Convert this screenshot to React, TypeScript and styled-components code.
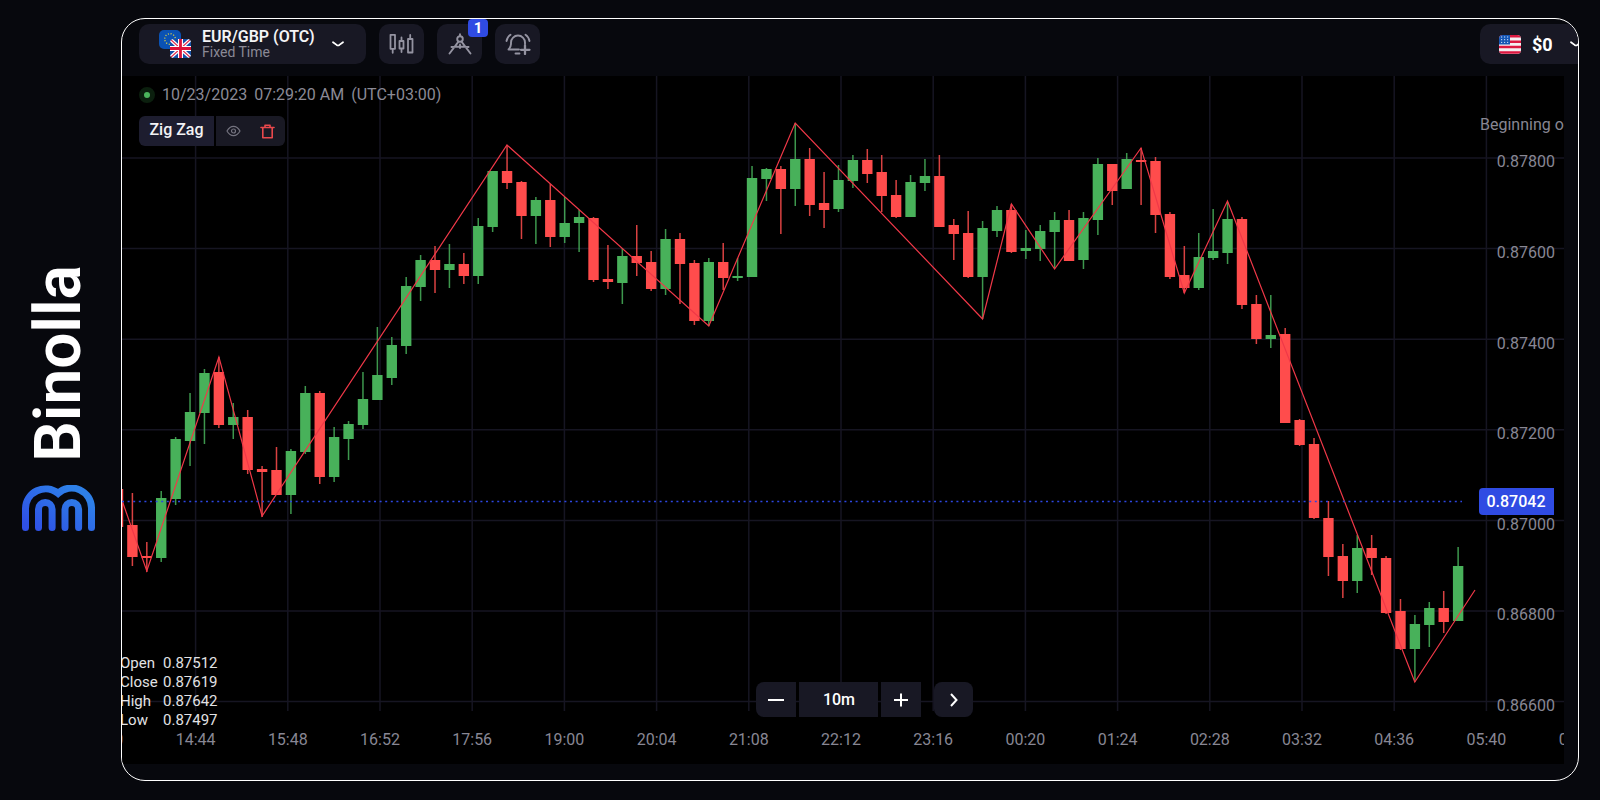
import React from 'react';
import styled, { createGlobalStyle } from 'styled-components';

const Global = createGlobalStyle`
  * { box-sizing: border-box; }
  body { margin: 0; background: #07080d; font-family: Roboto, "Liberation Sans", sans-serif; color: #fff; }
  button { font: inherit; color: inherit; border: 0; padding: 0; cursor: pointer; }
`;

const Page = styled.div`
  display: flex;
  min-height: 100vh;
  padding: 18px 21px 18px 0;
`;

const Side = styled.aside`
  flex: none;
  width: 121px;
  padding: 0 0 4px 22px;
  display: flex;
  flex-direction: column;
  justify-content: center;
  gap: 24px;
`;

const BrandName = styled.div`
  writing-mode: vertical-rl;
  transform: rotate(180deg);
  width: 74px;
  font-size: 64px;
  line-height: 74px;
  font-weight: 600;
`;

const Frame = styled.main`
  flex: 1;
  min-width: 0;
  align-self: flex-start;
  padding-bottom: 16px;
  border: 1px solid #fff;
  border-radius: 24px;
  overflow: hidden;
`;

const Header = styled.header`
  display: flex;
  gap: 13px;
  height: 57px;
  padding: 5px 0 12px 17px;
`;

const Control = styled.button<{ $w: number }>`
  position: relative;
  flex: none;
  width: ${(p) => p.$w}px;
  height: 40px;
  display: flex;
  align-items: center;
  justify-content: center;
  background: #181824;
  border-radius: 10px;

  svg { flex: none; }
`;

const Asset = styled(Control)`
  justify-content: flex-start;
  padding-left: 20px;
  text-align: left;
`;

const AssetText = styled.span`
  display: flex;
  flex-direction: column;
  margin: 0 17px 0 10px;
`;

const AssetName = styled.span`
  font-size: 16px;
  line-height: 16px;
  font-weight: 600;
  color: #f4f4f6;
`;

const AssetKind = styled.span`
  font-size: 14px;
  line-height: 14px;
  color: #8b8a96;
`;

const Account = styled(Control)`
  margin-left: auto;
  justify-content: flex-start;
  gap: 11px;
  padding-left: 19px;
  border-radius: 10px 0 0 10px;
  font-size: 18px;
  font-weight: 700;
`;

const AccountArrow = styled.span`
  display: flex;
  padding-left: 6px;
`;

const Badge = styled.span`
  position: absolute;
  top: -5px;
  right: -6px;
  width: 20px;
  height: 18px;
  border-radius: 4px;
  background: #2f4be3;
  font-size: 15px;
  line-height: 18px;
  font-weight: 700;
  text-align: center;
`;

const Chart = styled.section`
  position: relative;
  margin-right: 14px;
  background: #000;
`;

const Plot = styled.svg`
  display: block;
  width: 100%;
  height: auto;
`;

const Tick = styled.text<{ $strong?: boolean }>`
  font-size: 16px;
  font-weight: ${(p) => (p.$strong ? 500 : 400)};
  fill: ${(p) => (p.$strong ? '#fff' : '#888794')};
`;

const TopOverlay = styled.div`
  position: absolute;
  top: 10px;
  left: 17px;
  display: flex;
  flex-direction: column;
  gap: 12px;
`;

const Clock = styled.div`
  display: flex;
  align-items: center;
  gap: 7px;
  font-size: 16px;
  line-height: 18px;
  color: #8b8a96;
`;

const Dot = styled.span`
  width: 16px;
  height: 16px;
  border-radius: 50%;
  border: 5px solid #0b1f0e;
  background: #4bb55c;
`;

const Indicator = styled.div`
  display: flex;
  gap: 2px;
  height: 30px;
`;

const IndicatorName = styled.button`
  width: 75px;
  background: #1d1d2f;
  border-radius: 6px 0 0 6px;
  font-size: 16px;
  font-weight: 500;
  line-height: 28px;
  padding-bottom: 2px;
  color: #f2f2f4;
`;

const IndicatorTools = styled.div`
  display: flex;
  align-items: center;
  width: 69px;
  background: #191924;
  border-radius: 0 6px 6px 0;
`;

const ToolButton = styled.button`
  flex: 1;
  display: flex;
  justify-content: center;
  background: none;
`;

const Ohlc = styled.table`
  position: absolute;
  left: -2px;
  bottom: 34px;
  border-collapse: collapse;
  font-size: 15px;
  line-height: 19px;
  color: #e2e2e4;

  th, td { padding: 0; font-weight: 400; text-align: left; }
  th { width: 43px; }
`;

const IntervalBar = styled.div`
  position: absolute;
  left: 44%;
  bottom: 47px;
  display: flex;
  gap: 3px;
`;

const IntervalButton = styled.button<{ $w: number; $radius?: string }>`
  width: ${(p) => p.$w}px;
  height: 35px;
  display: flex;
  align-items: center;
  justify-content: center;
  background: #181824;
  border-radius: ${(p) => p.$radius ?? '0'};
  font-size: 16px;
  font-weight: 500;
`;

const NextWrap = styled.div`
  padding-left: 10px;
`;

const WIDTH = 1442;
const HEIGHT = 688;
const STEP = 14.41;
const FIRST_X = 10.4;

type Candle = [dir: 'u' | 'd', high: number, top: number, bottom: number, low: number];

const candles: Candle[] = [
  ['d', 413, 413, 451, 451], ['d', 417, 449, 481, 490], ['d', 466, 480, 482, 496], ['u', 415, 422, 482, 486],
  ['u', 361, 363, 423, 429], ['u', 317, 336, 365, 390], ['u', 293, 297, 337, 368], ['d', 281, 296, 349, 352],
  ['u', 327, 341, 349, 363], ['d', 334, 341, 394, 398], ['d', 390, 393, 396, 441], ['d', 371, 394, 419, 419],
  ['u', 373, 375, 419, 438], ['u', 310, 317, 376, 378], ['d', 315, 317, 401, 408], ['u', 351, 361, 401, 406],
  ['u', 345, 348, 363, 384], ['u', 296, 323, 349, 353], ['u', 251, 299, 324, 324], ['u', 261, 269, 302, 309],
  ['u', 201, 210, 270, 278], ['u', 179, 184, 211, 225], ['d', 170, 184, 194, 217], ['u', 168, 188, 194, 212],
  ['d', 177, 188, 200, 208], ['u', 142, 150, 200, 208], ['u', 95, 95, 151, 156], ['d', 69, 95, 107, 113],
  ['d', 105, 106, 140, 163], ['u', 121, 124, 140, 168], ['d', 108, 124, 161, 171], ['u', 121, 147, 161, 167],
  ['u', 134, 141, 147, 176], ['d', 141, 142, 204, 206], ['d', 169, 203, 206, 213], ['u', 172, 180, 207, 228],
  ['d', 149, 180, 187, 200], ['d', 175, 186, 213, 215], ['u', 153, 163, 213, 219], ['d', 157, 163, 188, 228],
  ['d', 184, 187, 245, 249], ['u', 182, 186, 245, 250], ['d', 167, 186, 202, 214], ['u', 182, 200, 202, 205],
  ['u', 90, 102, 201, 201], ['u', 92, 93, 103, 125], ['d', 90, 93, 113, 158], ['u', 47, 83, 113, 130],
  ['d', 72, 83, 129, 140], ['d', 96, 127, 134, 152], ['u', 89, 104, 133, 136], ['u', 79, 84, 105, 112],
  ['d', 73, 84, 98, 107], ['d', 79, 96, 120, 136], ['d', 104, 119, 141, 142], ['u', 99, 106, 141, 141],
  ['u', 83, 100, 107, 115], ['d', 79, 100, 151, 151], ['d', 143, 149, 158, 184], ['d', 135, 157, 201, 202],
  ['u', 145, 152, 201, 243], ['u', 130, 134, 155, 161], ['d', 128, 134, 176, 177], ['u', 154, 172, 175, 183],
  ['u', 149, 155, 173, 185], ['u', 136, 144, 156, 192], ['d', 134, 144, 185, 185], ['u', 136, 142, 184, 193],
  ['u', 82, 88, 144, 159], ['d', 88, 88, 115, 129], ['u', 77, 83, 113, 113], ['d', 72, 84, 86, 129],
  ['d', 81, 85, 139, 157], ['d', 136, 138, 201, 203], ['d', 170, 199, 212, 217], ['u', 157, 181, 212, 214],
  ['u', 133, 175, 182, 184], ['u', 126, 143, 177, 188], ['d', 141, 143, 229, 233], ['d', 219, 228, 263, 268],
  ['u', 219, 259, 263, 272], ['d', 252, 258, 347, 347], ['d', 343, 344, 369, 370], ['d', 362, 368, 442, 443],
  ['d', 425, 442, 481, 500], ['d', 468, 480, 505, 522], ['u', 459, 472, 505, 517], ['d', 459, 472, 482, 499],
  ['d', 480, 482, 537, 538], ['d', 523, 535, 573, 574], ['u', 539, 548, 573, 606], ['u', 526, 532, 549, 571],
  ['d', 515, 532, 546, 557], ['u', 471, 490, 545, 545],
];

const zigzag: [number, number][] = [
  [-4, 413], [24.8, 495], [96.9, 281], [140.1, 440], [385, 69], [586.8, 250], [673.2, 47], [860.6, 243],
  [889.4, 128], [932.6, 193], [1019, 72], [1062.3, 217], [1105.5, 125], [1292.8, 606], [1353, 514],
];

const times = [
  '13:40', '14:44', '15:48', '16:52', '17:56', '19:00', '20:04', '21:08', '22:12',
  '23:16', '00:20', '01:24', '02:28', '03:32', '04:36', '05:40', '06:44',
];
const timeX = (i: number) => -18.6 + i * 92.2;

const prices = ['0.87800', '0.87600', '0.87400', '0.87200', '0.87000', '0.86800', '0.86600'];
const priceY = (i: number) => 82 + i * 90.6;

const color = { u: '#48b15a', d: '#ff4c4c' };

function CandleChart() {
  return (
    <Plot viewBox={`0 0 ${WIDTH} ${HEIGHT}`} role="img" aria-label="EUR/GBP candlestick chart">
      <g stroke="#161522" strokeWidth="1.5">
        {times.map((t, i) => <line key={t} x1={timeX(i)} x2={timeX(i)} y1="0" y2="635" />)}
        {prices.map((p, i) => <line key={p} x1="0" x2={WIDTH} y1={priceY(i)} y2={priceY(i)} />)}
      </g>
      {candles.map(([dir, high, top, bottom, low], i) => {
        const x = FIRST_X + (i - 1) * STEP;
        return (
          <g key={i} fill={color[dir]}>
            <rect x={x - 0.75} y={high} width="1.5" height={low - high} opacity="0.85" />
            <rect x={x - 5.2} y={top} width="10.4" height={bottom - top} />
          </g>
        );
      })}
      <polyline points={zigzag.map((p) => p.join(',')).join(' ')} fill="none" stroke="#f03848" strokeWidth="1.2" />
      <line x1="0" x2="1340" y1="425.5" y2="425.5" stroke="#2c46e0" strokeWidth="1.4" strokeDasharray="2 3.6" />
      {prices.map((p, i) => <Tick key={p} x="1433" y={Math.round(priceY(i) + 9.4)} textAnchor="end">{p}</Tick>)}
      {times.map((t, i) => <Tick key={t} x={timeX(i)} y="669" textAnchor="middle">{t}</Tick>)}
      <Tick x="1358" y="54">Beginning of trade</Tick>
      <path d="M1432 412h-71a4 4 0 0 0-4 4v19a4 4 0 0 0 4 4h71z" fill="#2f4be3" />
      <Tick $strong x="1394" y="431" textAnchor="middle">0.87042</Tick>
    </Plot>
  );
}

const BrandMark = () => (
  <svg width="73" height="46" viewBox="0 0 73 46" fill="none" stroke="url(#brand)" strokeWidth="7" strokeLinecap="round" aria-hidden="true">
    <defs>
      <linearGradient id="brand" gradientUnits="userSpaceOnUse" x1="14" y1="46" x2="44" y2="0">
        <stop offset="0" stopColor="#2f50e6" />
        <stop offset="1" stopColor="#2e80e8" />
      </linearGradient>
    </defs>
    <path d="M3.5 42.5V23.5A20 20 0 0 1 36 8.3A20 20 0 0 1 69.5 23.5V42.5" />
    <path d="M16.5 42.5V24.3a6.8 6.8 0 0 1 13.6 0V42.5M43 42.5V24.3a6.8 6.8 0 0 1 13.6 0V42.5" />
  </svg>
);

const Chevron = () => (
  <svg width="12" height="8" viewBox="0 0 12 8" fill="none" stroke="#fff" strokeWidth="1.8" strokeLinecap="round" strokeLinejoin="round" aria-hidden="true">
    <path d="M1 2.2L4.6 4.9Q6 5.8 7.4 4.9L11 2.2" />
  </svg>
);

const PairFlags = () => (
  <svg width="33" height="30" viewBox="0 0 33 30" aria-hidden="true">
    <clipPath id="uk"><rect x="11" y="10" width="21" height="19" rx="4" /></clipPath>
    <rect x="0" y="1" width="22" height="19" rx="5" fill="#0a52b4" />
    <circle cx="11" cy="10" r="5.3" fill="none" stroke="#d8cf4a" strokeWidth="1.3" strokeDasharray="1.1 1.67" />
    <g clipPath="url(#uk)">
      <rect x="11" y="10" width="21" height="19" fill="#1450a8" />
      <path d="M11 10l21 19M32 10L11 29" stroke="#fff" strokeWidth="3.6" />
      <path d="M11 10l21 19M32 10L11 29" stroke="#e0284a" strokeWidth="1.2" />
      <path d="M21.5 10v19M11 19.5h21" stroke="#fff" strokeWidth="5" />
      <path d="M21.5 10v19M11 19.5h21" stroke="#de1238" strokeWidth="2.8" />
    </g>
  </svg>
);

const UsFlag = () => (
  <svg width="22" height="19" viewBox="0 0 22 19" aria-hidden="true">
    <clipPath id="us"><rect width="22" height="19" rx="4" /></clipPath>
    <g clipPath="url(#us)">
      <rect width="22" height="19" fill="#f3eef0" />
      <path d="M0 1.3h22M0 6.7h22M0 12h22M0 17.5h22" stroke="#dc1840" strokeWidth="2.6" />
      <rect width="11" height="9.5" fill="#1556b4" />
      <path d="M2 2h8M2 4.7h8M2 7.4h8" stroke="#cfe0f5" strokeWidth="1" strokeDasharray="1.2 1.8" />
    </g>
  </svg>
);

const iconProps = { fill: 'none', stroke: '#9493a1', strokeLinecap: 'round', strokeLinejoin: 'round', 'aria-hidden': true } as const;

const CandlesIcon = () => (
  <svg width="25" height="22" viewBox="0 0 25 22" strokeWidth="1.8" {...iconProps}>
    <path d="M1.5 1.8h4.5v14h-4.5zM3.7 15.8v4M10.5 8h4v7.5h-4zM12.5 4.5v3.5M12.5 15.5v3.5M19 6h4.5v13.5h-4.5zM21.2 2v4" />
  </svg>
);

const CompassIcon = () => (
  <svg width="24" height="22" viewBox="0 0 24 22" strokeWidth="1.9" {...iconProps}>
    <circle cx="12" cy="6" r="2.8" />
    <path d="M12 1.2v1.8M10.5 8.6L1.5 20.5M13.5 8.6L22.5 20.5M3.5 14q8.5-1 17 0M12 11.5v3.5" />
  </svg>
);

const BellIcon = () => (
  <svg width="26" height="22" viewBox="0 0 26 22" strokeWidth="1.9" {...iconProps}>
    <path d="M1.5 8C2 5.2 3.5 3 5.5 1.7M24.5 8C24 5.2 22.5 3 20.5 1.7" />
    <path d="M14 16.5H3.5c1.5-1.5 2.5-3 2.5-5.5V9.5a7 7 0 0 1 14 0v1.5M10.5 20.5h4" />
    <path d="M20 12.5v8.5M16 16.8h8.5" strokeWidth="2.3" />
  </svg>
);

const EyeIcon = () => (
  <svg width="15" height="12" viewBox="0 0 15 12" strokeWidth="1.2" {...iconProps} stroke="#74737f">
    <path d="M1 6C3 2.5 5 1.3 7.5 1.3S12 2.5 14 6c-2 3.5-4 4.7-6.5 4.7S3 9.5 1 6z" />
    <circle cx="7.5" cy="6" r="2" />
  </svg>
);

const TrashIcon = () => (
  <svg width="15" height="15" viewBox="0 0 15 15" strokeWidth="1.6" {...iconProps} stroke="#e8484c">
    <path d="M1 3.5h13M5 3.5V1.2h5v2.3M2.8 3.5v10.3h9.4V3.5" />
  </svg>
);

const Glyph = ({ d }: { d: string }) => (
  <svg width="18" height="18" viewBox="0 0 18 18" fill="none" stroke="#fff" strokeWidth="2" aria-hidden="true">
    <path d={d} />
  </svg>
);

const quote = [['Open', '0.87512'], ['Close', '0.87619'], ['High', '0.87642'], ['Low', '0.87497']];

export default function App() {
  return (
    <>
      <Global />
      <Page>
        <Side>
          <BrandName>Binolla</BrandName>
          <BrandMark />
        </Side>
        <Frame>
          <Header>
            <Asset $w={227}>
              <PairFlags />
              <AssetText>
                <AssetName>EUR/GBP (OTC)</AssetName>
                <AssetKind>Fixed Time</AssetKind>
              </AssetText>
              <Chevron />
            </Asset>
            <Control $w={45} aria-label="Chart type"><CandlesIcon /></Control>
            <Control $w={45} aria-label="Indicators"><CompassIcon /><Badge>1</Badge></Control>
            <Control $w={45} aria-label="Add alert"><BellIcon /></Control>
            <Account $w={98}>
              <UsFlag />
              <span>$0</span>
              <AccountArrow><Chevron /></AccountArrow>
            </Account>
          </Header>
          <Chart>
            <CandleChart />
            <TopOverlay>
              <Clock>
                <Dot />
                <span>10/23/2023</span>
                <span>07:29:20 AM</span>
                <span>(UTC+03:00)</span>
              </Clock>
              <Indicator>
                <IndicatorName>Zig Zag</IndicatorName>
                <IndicatorTools>
                  <ToolButton aria-label="Hide indicator"><EyeIcon /></ToolButton>
                  <ToolButton aria-label="Remove indicator"><TrashIcon /></ToolButton>
                </IndicatorTools>
              </Indicator>
            </TopOverlay>
            <Ohlc>
              <tbody>
                {quote.map(([label, value]) => (
                  <tr key={label}><th scope="row">{label}</th><td>{value}</td></tr>
                ))}
              </tbody>
            </Ohlc>
            <IntervalBar>
              <IntervalButton $w={40} $radius="8px 0 0 8px" aria-label="Shorter interval"><Glyph d="M1 9h16" /></IntervalButton>
              <IntervalButton $w={79}>10m</IntervalButton>
              <IntervalButton $w={40} aria-label="Longer interval"><Glyph d="M2 9h14M9 2.5v13" /></IntervalButton>
              <NextWrap>
                <IntervalButton $w={39} $radius="8px" aria-label="Next"><Glyph d="M6 3l5.5 6L6 15" /></IntervalButton>
              </NextWrap>
            </IntervalBar>
          </Chart>
        </Frame>
      </Page>
    </>
  );
}
